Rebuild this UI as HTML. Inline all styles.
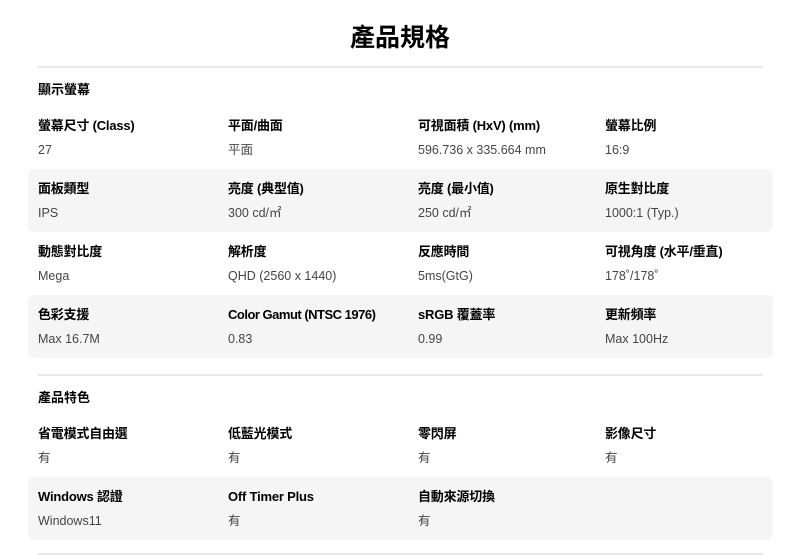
<!DOCTYPE html>
<html><head><meta charset="utf-8"><style>
*{margin:0;padding:0;box-sizing:border-box}
body{width:800px;height:555px;background:#fff;font-family:"Liberation Sans","Noto Sans CJK TC",sans-serif;color:#000;position:relative;overflow:hidden}
h1{position:absolute;top:18px;left:0;width:800px;text-align:center;font-size:25px;font-weight:bold;font-family:"Noto Sans CJK TC",sans-serif;line-height:36px}
.line{position:absolute;left:38px;width:725px;height:2px;background:#e8e8e8}
.sec{position:absolute;left:38px;font-size:13px;font-weight:bold;line-height:18px}
.row{position:absolute;left:28px;width:745px;height:63px;border-radius:6px}
.g{background:#f5f5f5}
.l{position:absolute;top:11px;font-size:13px;font-weight:bold;white-space:nowrap;line-height:18px;letter-spacing:-0.2px}
.v{position:absolute;top:35px;font-size:12.5px;color:#444;white-space:nowrap;line-height:18px}
</style></head><body>
<h1>產品規格</h1>
<div class="line" style="top:66px"></div>
<div class="sec" style="top:81px">顯示螢幕</div>

<div class="row" style="top:106px">
<div class="l" style="left:10px">螢幕尺寸 (Class)</div><div class="v" style="left:10px">27</div>
<div class="l" style="left:200px">平面/曲面</div><div class="v" style="left:200px">平面</div>
<div class="l" style="left:390px">可視面積 (HxV) (mm)</div><div class="v" style="left:390px">596.736 x 335.664 mm</div>
<div class="l" style="left:577px">螢幕比例</div><div class="v" style="left:577px">16:9</div>
</div>
<div class="row g" style="top:169px">
<div class="l" style="left:10px">面板類型</div><div class="v" style="left:10px">IPS</div>
<div class="l" style="left:200px">亮度 (典型值)</div><div class="v" style="left:200px">300 cd/㎡</div>
<div class="l" style="left:390px">亮度 (最小值)</div><div class="v" style="left:390px">250 cd/㎡</div>
<div class="l" style="left:577px">原生對比度</div><div class="v" style="left:577px">1000:1 (Typ.)</div>
</div>
<div class="row" style="top:232px">
<div class="l" style="left:10px">動態對比度</div><div class="v" style="left:10px">Mega</div>
<div class="l" style="left:200px">解析度</div><div class="v" style="left:200px">QHD (2560 x 1440)</div>
<div class="l" style="left:390px">反應時間</div><div class="v" style="left:390px">5ms(GtG)</div>
<div class="l" style="left:577px">可視角度 (水平/垂直)</div><div class="v" style="left:577px">178˚/178˚</div>
</div>
<div class="row g" style="top:295px">
<div class="l" style="left:10px">色彩支援</div><div class="v" style="left:10px">Max 16.7M</div>
<div class="l" style="left:200px;letter-spacing:-0.5px">Color Gamut (NTSC 1976)</div><div class="v" style="left:200px">0.83</div>
<div class="l" style="left:390px">sRGB 覆蓋率</div><div class="v" style="left:390px">0.99</div>
<div class="l" style="left:577px">更新頻率</div><div class="v" style="left:577px">Max 100Hz</div>
</div>

<div class="line" style="top:374px"></div>
<div class="sec" style="top:389px">產品特色</div>

<div class="row" style="top:414px">
<div class="l" style="left:10px">省電模式自由選</div><div class="v" style="left:10px">有</div>
<div class="l" style="left:200px">低藍光模式</div><div class="v" style="left:200px">有</div>
<div class="l" style="left:390px">零閃屏</div><div class="v" style="left:390px">有</div>
<div class="l" style="left:577px">影像尺寸</div><div class="v" style="left:577px">有</div>
</div>
<div class="row g" style="top:477px">
<div class="l" style="left:10px">Windows 認證</div><div class="v" style="left:10px">Windows11</div>
<div class="l" style="left:200px">Off Timer Plus</div><div class="v" style="left:200px">有</div>
<div class="l" style="left:390px">自動來源切換</div><div class="v" style="left:390px">有</div>
</div>
<div class="line" style="top:553px"></div>
</body></html>
